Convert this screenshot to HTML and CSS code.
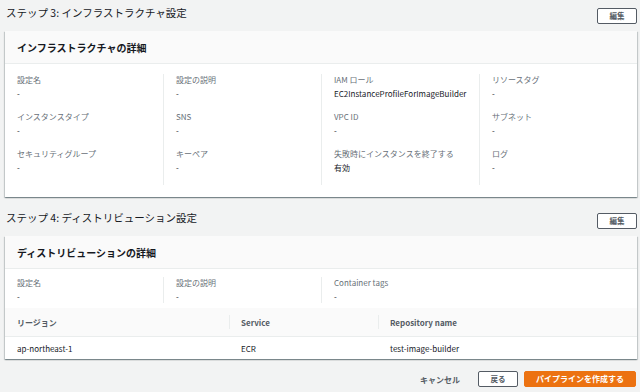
FILE: index.html
```html
<!DOCTYPE html>
<html lang="ja">
<head>
  <meta charset="UTF-8" />
  <title>パイプラインの確認</title>
  <meta name="viewport" content="width=device-width, initial-scale=1" />
  <link rel="stylesheet" href="styles.css">
</head>
<body>
  <div class="page">

    <!-- ステップ 3 -->
    <div class="step-head">
      <h2 class="step-title">ステップ 3: インフラストラクチャ設定</h2>
      <button class="btn">編集</button>
    </div>
    <div class="card">
      <div class="card-head">インフラストラクチャの詳細</div>
      <div class="card-body">
        <div class="cols">
          <div class="col">
            <div class="item"><div class="label">設定名</div><div class="value">-</div></div>
            <div class="item"><div class="label">インスタンスタイプ</div><div class="value">-</div></div>
            <div class="item"><div class="label">セキュリティグループ</div><div class="value">-</div></div>
          </div>
          <div class="col">
            <div class="item"><div class="label">設定の説明</div><div class="value">-</div></div>
            <div class="item"><div class="label">SNS</div><div class="value">-</div></div>
            <div class="item"><div class="label">キーペア</div><div class="value">-</div></div>
          </div>
          <div class="col">
            <div class="item"><div class="label">IAM ロール</div><div class="value">EC2InstanceProfileForImageBuilder</div></div>
            <div class="item"><div class="label">VPC ID</div><div class="value">-</div></div>
            <div class="item"><div class="label">失敗時にインスタンスを終了する</div><div class="value">有効</div></div>
          </div>
          <div class="col">
            <div class="item"><div class="label">リソースタグ</div><div class="value">-</div></div>
            <div class="item"><div class="label">サブネット</div><div class="value">-</div></div>
            <div class="item"><div class="label">ログ</div><div class="value">-</div></div>
          </div>
        </div>
      </div>
    </div>

    <!-- ステップ 4 -->
    <div class="step-head step-next">
      <h2 class="step-title">ステップ 4: ディストリビューション設定</h2>
      <button class="btn">編集</button>
    </div>
    <div class="card">
      <div class="card-head">ディストリビューションの詳細</div>
      <div class="card-body short">
        <div class="cols">
          <div class="col">
            <div class="item"><div class="label">設定名</div><div class="value">-</div></div>
          </div>
          <div class="col">
            <div class="item"><div class="label">設定の説明</div><div class="value">-</div></div>
          </div>
          <div class="col">
            <div class="item"><div class="label">Container tags</div><div class="value">-</div></div>
          </div>
          <div class="col empty"></div>
        </div>
      </div>
      <table class="dist-table">
        <thead>
          <tr>
            <th class="c-region">リージョン</th>
            <th class="c-service"><span>Service</span></th>
            <th class="c-repo"><span>Repository name</span></th>
          </tr>
        </thead>
        <tbody>
          <tr>
            <td>ap-northeast-1</td>
            <td>ECR</td>
            <td>test-image-builder</td>
          </tr>
        </tbody>
      </table>
    </div>

    <div class="actions">
      <button class="btn-link">キャンセル</button>
      <button class="btn">戻る</button>
      <button class="btn btn-primary">パイプラインを作成する</button>
    </div>

  </div>
</body>
</html>
```

FILE: styles.css
```css
body {
  margin: 0;
  background: #f2f3f3;
  font-family: "Noto Sans CJK JP", "Noto Sans", sans-serif;
  color: #16191f;
}
.page {
  padding: 0 3px 0 5px;
}
.step-head {
  display: flex;
  justify-content: space-between;
  align-items: flex-start;
  height: 31px;
}
.step-next {
  margin-top: 8px;
}
.step-title {
  margin: 5px 0 0 1px;
  font-size: 10.5px;
  line-height: 16px;
  font-weight: normal;
  color: #16191f;
}
.btn {
  margin-top: 8px;
  height: 16px;
  min-width: 40px;
  padding: 0 8px;
  border: 1px solid #545b64;
  border-radius: 2px;
  background: #fff;
  color: #545b64;
  font-family: inherit;
  font-size: 7.5px;
  font-weight: bold;
  line-height: 14px;
  cursor: pointer;
}
.card {
  background: #fff;
  box-shadow: 0 1px 1px 0 rgba(0, 28, 36, 0.3), 1px 1px 1px 0 rgba(0, 28, 36, 0.15), -1px 1px 1px 0 rgba(0, 28, 36, 0.15);
}
.card-head {
  height: 33px;
  padding: 0 12px;
  background: #fafafa;
  border-bottom: 1px solid #eaeded;
  font-size: 10px;
  font-weight: bold;
  line-height: 33px;
  box-sizing: border-box;
}
.card-body {
  padding: 10px 0 12px;
}
.card-body.short {
  padding: 8px 0 5px;
}
.cols {
  display: grid;
  grid-template-columns: repeat(4, 1fr);
}
.col {
  padding: 0 12px;
  border-left: 1px solid #eaeded;
}
.col:first-child,
.col.empty {
  border-left: none;
}
.item {
  margin-bottom: 11px;
}
.short .item {
  margin-bottom: 0;
}
.label {
  font-size: 8px;
  line-height: 12px;
  color: #687078;
  margin-bottom: 2px;
}
.value {
  font-size: 8px;
  line-height: 12px;
  color: #16191f;
}
.dist-table {
  width: 100%;
  border-collapse: collapse;
  font-size: 8px;
}
.dist-table th {
  height: 28px;
  padding: 0 12px;
  background: #fafafa;
  border-bottom: 1px solid #eaeded;
  text-align: left;
  color: #545b64;
  font-weight: bold;
  position: relative;
}
.dist-table th + th {
  border-left: none;
}
.dist-table th + th::before {
  content: "";
  position: absolute;
  left: 0;
  top: 7px;
  bottom: 7px;
  border-left: 1px solid #eaeded;
}
.c-region {
  width: 200px;
}
.c-service {
  width: 125px;
}
.dist-table td {
  height: 22px;
  padding: 0 12px;
  color: #16191f;
}
.actions {
  display: flex;
  justify-content: flex-end;
  align-items: center;
  gap: 6px;
  margin-top: 12px;
  padding-right: 1px;
}
.actions .btn {
  margin-top: 0;
}
.btn-link {
  height: 16px;
  margin-right: 12px;
  padding: 0;
  border: none;
  background: none;
  color: #545b64;
  font-family: inherit;
  font-size: 8px;
  font-weight: bold;
  cursor: pointer;
}
.btn-primary {
  width: 112px;
  background: #ec7211;
  border-color: #ec7211;
  color: #fff;
  font-size: 8px;
}
```
